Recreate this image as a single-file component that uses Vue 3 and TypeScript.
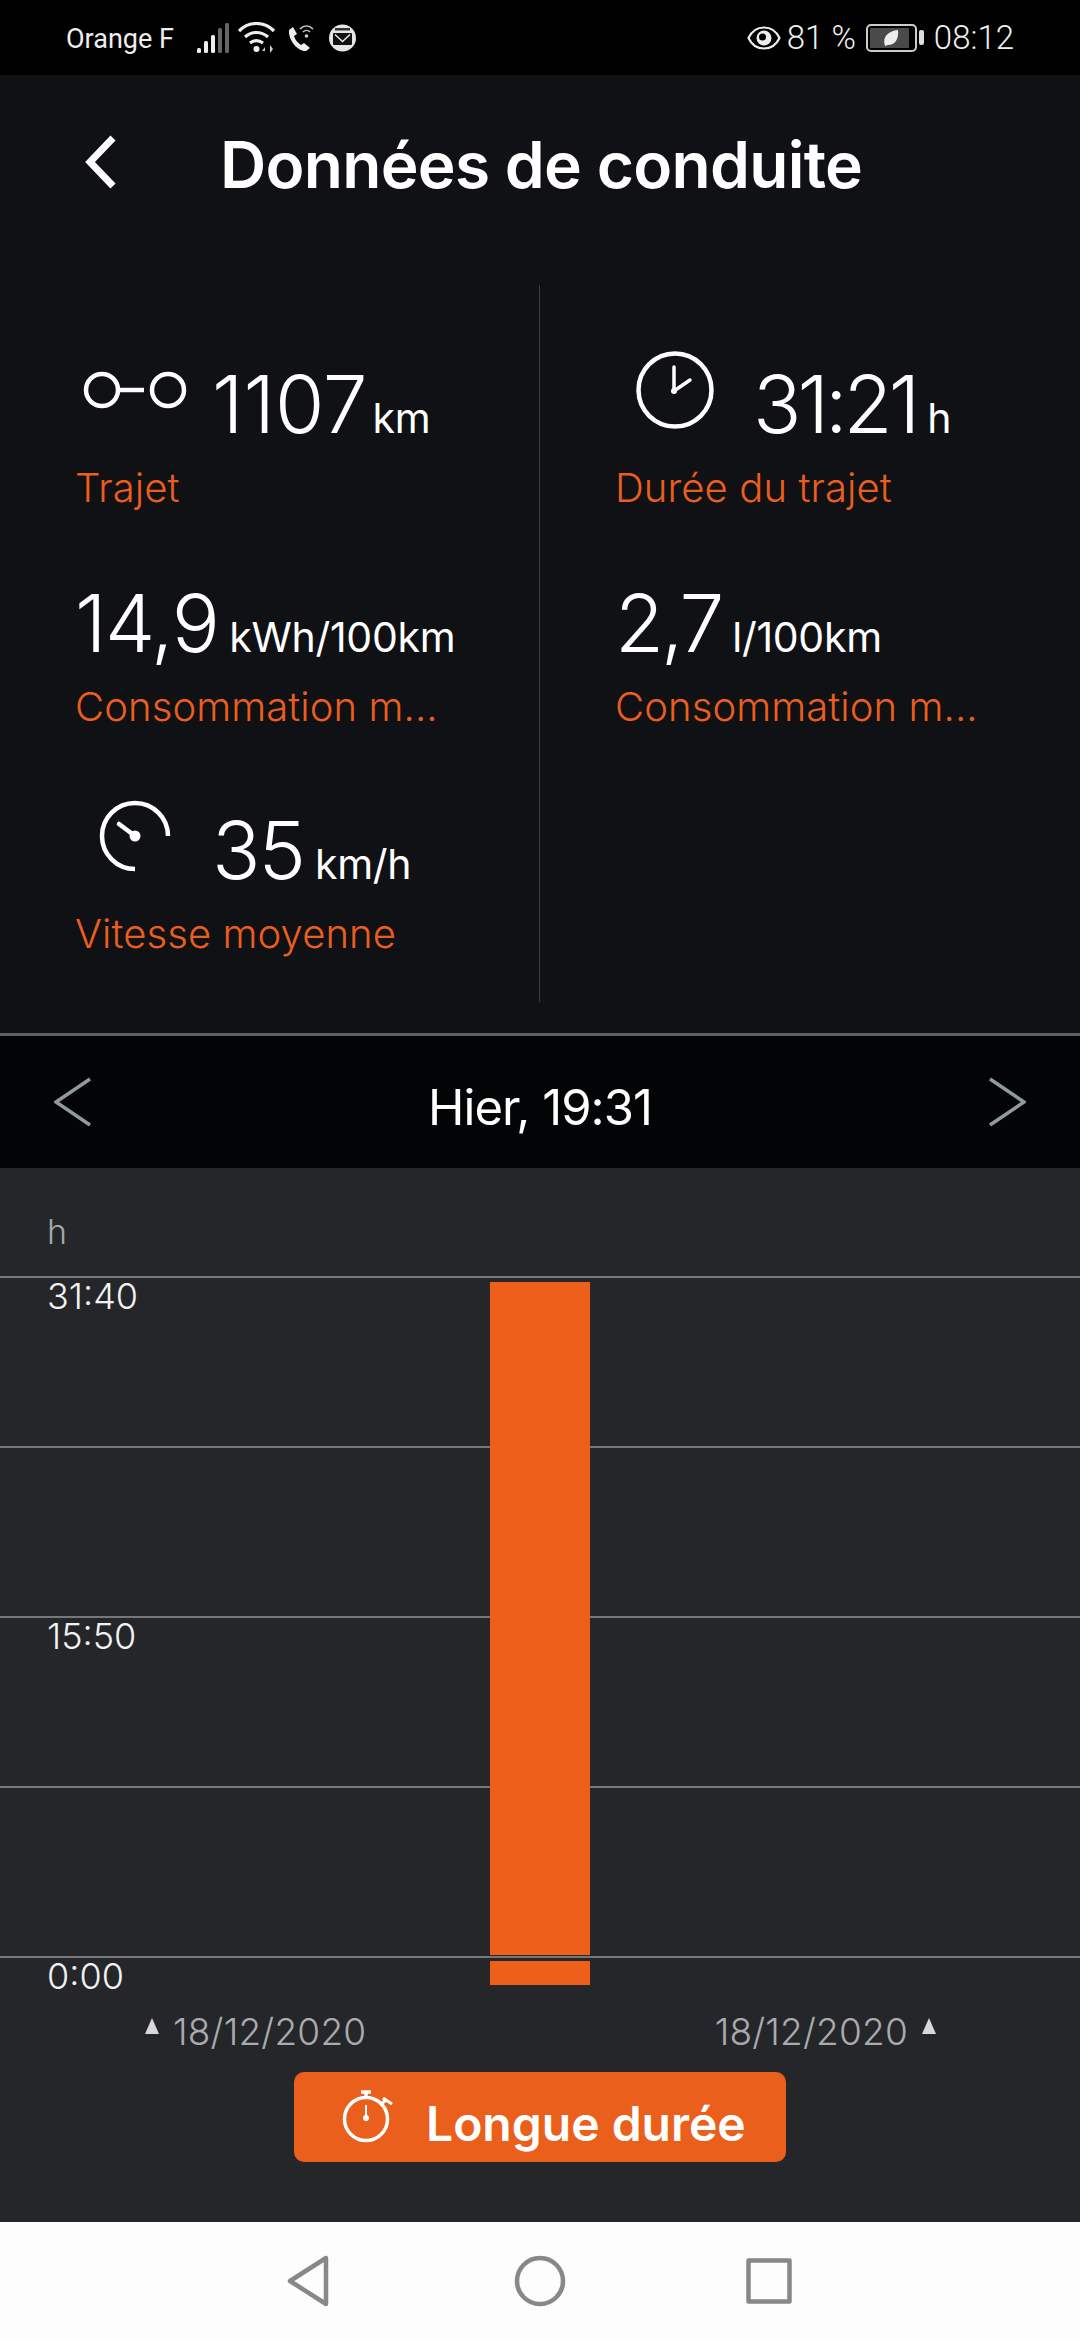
<script setup lang="ts">
interface Stat {
  value: string
  unit: string
  label: string
  icon?: 'route' | 'clock' | 'speed'
}

const stats: Stat[] = [
  { value: '1107', unit: 'km', label: 'Trajet', icon: 'route' },
  { value: '31:21', unit: 'h', label: 'Durée du trajet', icon: 'clock' },
  { value: '14,9', unit: 'kWh/100km', label: 'Consommation m...' },
  { value: '2,7', unit: 'l/100km', label: 'Consommation m...' },
  { value: '35', unit: 'km/h', label: 'Vitesse moyenne', icon: 'speed' }
]

const yLabels = [
  { text: '31:40', row: 0 },
  { text: '15:50', row: 2 },
  { text: '0:00', row: 4 }
]
</script>

<template>
  <div class="screen">
    <div class="status-bar">
      <div class="status-left">
        <span class="carrier">Orange F</span>
        <svg class="st-signal" width="34" height="32" viewBox="0 0 34 32">
          <rect x="1" y="26" width="4" height="5" rx="1.500" fill="#eee" />
          <rect x="8" y="19" width="4" height="12" rx="1.500" fill="#eee" />
          <rect x="15" y="13" width="4" height="18" rx="1.500" fill="#eee" />
          <rect x="22" y="6" width="4" height="25" rx="1.500" fill="#666" />
          <rect x="29" y="1" width="4" height="30" rx="1.500" fill="#666" />
        </svg>
        <svg class="st-wifi" width="38" height="32" viewBox="0 0 38 32" fill="none" stroke="#eee" stroke-width="3.200">
          <path d="M1 9C11 -1 26 -1 36 9" />
          <path d="M7 15C14 9 23 9 30 15" />
          <path d="M12 21C16 18 21 18 25 21" />
          <circle cx="18.500" cy="27" r="3" fill="#eee" stroke="none" />
          <path d="M27 25l-3 4h3zM32 23v8l3-4z" fill="#ccc" stroke="none" />
        </svg>
        <svg class="st-call" width="28" height="28" viewBox="0 0 28 28" fill="none">
          <path d="M2 6l4-3 4 7-3 2c1 4 4 7 7 9l3-2 6 5-4 3C12 28 1 17 2 6z" fill="#eee" />
          <path d="M13 5c4-4 9-4 13 0M16 8c2-2 5-2 7 0" stroke="#ccc" stroke-width="1.600" />
          <circle cx="19.500" cy="12" r="1.800" fill="#ccc" />
        </svg>
        <svg class="st-mail" width="27" height="28" viewBox="0 0 27 28" fill="none">
          <circle cx="13.500" cy="14" r="13.500" fill="#e6e6e6" />
          <rect x="6" y="4" width="15" height="2.500" fill="#333" />
          <rect x="4" y="9" width="19" height="12" rx="1" fill="#111" />
          <path d="M6 10.500l7.500 7 7.500-7" stroke="#e6e6e6" stroke-width="1.600" />
        </svg>
      </div>
      <div class="status-right">
        <svg class="st-eye" width="34" height="26" viewBox="0 0 34 26" fill="none">
          <path d="M1.500 13C8-1 26-1 32.500 13 26 27 8 27 1.500 13z" stroke="#eee" stroke-width="2.200" />
          <circle cx="17" cy="13" r="7.500" fill="#eee" />
          <circle cx="15.500" cy="12" r="3.500" fill="#000" />
        </svg>
        <span class="st-pct">81 %</span>
        <svg class="st-batt" width="60" height="28" viewBox="0 0 60 28" fill="none">
          <rect x="1" y="1" width="49" height="26" rx="4" stroke="#ccc" stroke-width="2" />
          <rect x="4" y="4" width="39" height="20" rx="1" fill="#4a4a4a" />
          <rect x="53" y="6" width="5" height="15" rx="2" fill="#ddd" />
          <path d="M19 22c-3-9 3-15 13-16 1 9-3 15-10 15z" fill="#eee" />
        </svg>
        <span class="st-time">08:12</span>
      </div>
    </div>

    <header class="top-bar">
      <svg class="back" width="36" height="56" viewBox="0 0 36 56" fill="none">
        <path d="M33 4L10 28l23 24" stroke="#fff" stroke-width="7" />
      </svg>
      <h1 class="title">Données de conduite</h1>
    </header>

    <section class="stats">
      <div class="stats-grid">
        <div v-for="stat in stats" :key="stat.value" class="stat">
          <div class="stat-top" :class="stat.icon ? `stat-top--${stat.icon}` : ''">
            <svg v-if="stat.icon === 'route'" class="stat-icon" width="106" height="40" viewBox="0 0 106 40" fill="none" stroke="#fff" stroke-width="4.500">
              <circle cx="20" cy="20" r="16" />
              <path d="M36 20h26" />
              <circle cx="86" cy="20" r="16" />
            </svg>
            <svg v-if="stat.icon === 'clock'" class="stat-icon" width="78" height="78" viewBox="0 0 78 78" fill="none" stroke="#fff" stroke-width="4.500" stroke-linecap="round">
              <circle cx="39" cy="39" r="36.500" />
              <path d="M38 40V16M38 40l16-11" stroke-width="3.500" />
              <circle cx="38" cy="40" r="3" fill="#fff" stroke="none" />
            </svg>
            <svg v-if="stat.icon === 'speed'" class="stat-icon" width="74" height="74" viewBox="0 0 74 74" fill="none" stroke="#fff" stroke-width="4.500">
              <path d="M69 37A33 33 0 1 0 36 70" />
              <path d="M20 25l16 12" stroke-linecap="round" />
              <circle cx="36" cy="37" r="5.500" fill="#fff" stroke="none" />
            </svg>
            <span class="stat-value">{{ stat.value }}</span>
            <span class="stat-unit">{{ stat.unit }}</span>
          </div>
          <div class="stat-label">{{ stat.label }}</div>
        </div>
      </div>
    </section>

    <div class="date-bar">
      <svg width="38" height="50" viewBox="0 0 38 50" fill="none">
        <path d="M36 2L2 25l34 23" stroke="#8f9a9e" stroke-width="3.500" />
      </svg>
      <span class="date-text">Hier, 19:31</span>
      <svg width="38" height="50" viewBox="0 0 38 50" fill="none">
        <path d="M2 2l34 23L2 48" stroke="#8f9a9e" stroke-width="3.500" />
      </svg>
    </div>

    <section class="chart">
      <div class="chart-unit">h</div>
      <div class="plot">
        <div v-for="n in 4" :key="n" class="plot-row"></div>
        <div class="plot-end"></div>
        <span
          v-for="l in yLabels"
          :key="l.text"
          class="y-label"
          :style="{ top: `${l.row * 170 - 2}px` }"
        >{{ l.text }}</span>
        <div class="bar"></div>
        <div class="bar-gap"></div>
      </div>
      <div class="dates">
        <div class="date-mark">
          <span class="tri"></span>
          <span>18/12/2020</span>
        </div>
        <div class="date-mark">
          <span>18/12/2020</span>
          <span class="tri"></span>
        </div>
      </div>
      <div class="btn">
        <svg class="btn-icon" width="62" height="62" viewBox="0 0 62 62" fill="none" stroke="#fff">
          <circle cx="26" cy="35" r="21.500" stroke-width="3.500" />
          <path d="M21 8h10" stroke-width="3.500" />
          <path d="M26 8v6" stroke-width="3.500" />
          <path d="M26 21v13" stroke-width="2" />
          <circle cx="26" cy="34" r="3" fill="#fff" stroke="none" />
          <path d="M40 21l6-5" stroke-width="3" />
          <path d="M43 14l9 6" stroke-width="3" />
        </svg>
        <span class="btn-text">Longue durée</span>
      </div>
    </section>

    <nav class="nav-bar">
      <svg width="48" height="54" viewBox="0 0 48 54" fill="none" stroke="#888" stroke-width="4.500" stroke-linejoin="round">
        <path d="M39 4v46L3 27z" />
      </svg>
      <svg width="52" height="52" viewBox="0 0 52 52" fill="none" stroke="#888" stroke-width="4.500">
        <circle cx="26" cy="26" r="23" />
      </svg>
      <svg width="46" height="46" viewBox="0 0 46 46" fill="none" stroke="#888" stroke-width="4.500" stroke-linejoin="round">
        <rect x="2.500" y="2.500" width="41" height="41" />
      </svg>
    </nav>
  </div>
</template>

<style>
html,
body {
  margin: 0;
  background: #000;
}
</style>

<style scoped>
.screen {
  width: 1080px;
  height: 2340px;
  display: flex;
  flex-direction: column;
  overflow: hidden;
  background: #101114;
  font-family: Inter, "Liberation Sans", sans-serif;
  color: #fff;
}

.status-bar {
  height: 75px;
  flex: none;
  background: #000;
  display: flex;
  justify-content: space-between;
  align-items: center;
  padding: 0 66px;
  box-sizing: border-box;
  font-family: Roboto, sans-serif;
  color: #eee;
}

.status-left,
.status-right {
  display: flex;
  align-items: center;
}

.carrier {
  width: 130px;
  font-size: 27px;
  padding-top: 2px;
}

.st-wifi { margin-left: 8px; }
.st-call { margin-left: 11px; }
.st-mail { margin-left: 14px; }

.st-pct {
  font-size: 33px;
  font-weight: 300;
  margin-left: 6px;
}

.st-batt { margin-left: 10px; }

.st-time {
  font-size: 33px;
  font-weight: 300;
  margin-left: 8px;
}

.top-bar {
  height: 178px;
  flex: none;
  display: flex;
  align-items: center;
  padding-left: 80px;
}

.back {
  margin-top: -4px;
}

.title {
  margin: 0 0 0 104px;
  font-size: 64px;
  font-weight: 600;
  letter-spacing: -0.700px;
  white-space: nowrap;
}

.stats {
  height: 783px;
  flex: none;
  box-sizing: border-box;
  padding-top: 101px;
  position: relative;
  border-bottom: 3px solid #5f5f5f;
}

.stats::after {
  content: "";
  position: absolute;
  left: 539px;
  top: 32px;
  height: 717px;
  width: 1px;
  background: #3a3c40;
}

.stats-grid {
  display: grid;
  grid-template-columns: 540px 540px;
  grid-template-rows: 219px 227px auto;
}

.stat {
  padding-left: 75px;
  min-width: 0;
}

.stat-top {
  height: 100px;
  display: flex;
  align-items: baseline;
  white-space: nowrap;
}

.stat-icon {
  align-self: flex-start;
  flex: none;
}

.stat-value {
  font-size: 80px;
  font-weight: 300;
  letter-spacing: -3px;
  line-height: 100px;
}

.stat:nth-child(3) .stat-value {
  letter-spacing: -1.500px;
}

.stat-unit {
  font-size: 41px;
  font-weight: 400;
  letter-spacing: -0.300px;
  margin-left: 11px;
}

.stat-top--route .stat-icon {
  margin: 16px 24px 0 7px;
}

.stat-top--route .stat-value {
  letter-spacing: 0;
}

.stat-top--route .stat-unit {
  margin-left: 5px;
}

.stat-top--clock .stat-icon {
  margin: -3px 39px 0 21px;
}

.stat-top--clock .stat-value {
  letter-spacing: -4px;
}

.stat-top--speed .stat-icon {
  margin: -1px 39px 0 24px;
}

.stat-top--speed .stat-value {
  letter-spacing: -2px;
}

.stat-label {
  margin-top: 9px;
  font-size: 40px;
  line-height: 50px;
  font-weight: 300;
  letter-spacing: 0.100px;
  color: #ec5e1e;
  white-space: nowrap;
}

.date-bar {
  height: 132px;
  flex: none;
  background: #030405;
  display: flex;
  align-items: center;
  justify-content: space-between;
  padding: 0 54px;
}

.date-text {
  padding-top: 10px;
  font-size: 49px;
  letter-spacing: -1px;
}

.chart {
  flex: 1;
  background: #25262a;
  display: flex;
  flex-direction: column;
  min-height: 0;
}

.chart-unit {
  height: 108px;
  box-sizing: border-box;
  padding: 43px 0 0 47px;
  font-size: 34px;
  font-weight: 300;
  color: #a4a8aa;
}

.plot {
  position: relative;
  flex: none;
}

.plot-row {
  height: 170px;
  border-top: 2px solid #77787b;
  box-sizing: border-box;
}

.plot-end {
  border-top: 2px solid #77787b;
  height: 54px;
  box-sizing: border-box;
}

.y-label {
  position: absolute;
  left: 47px;
  font-size: 36px;
  font-weight: 300;
  line-height: 44px;
  color: #f2f2f2;
}

.bar {
  position: absolute;
  left: 490px;
  top: 6px;
  width: 100px;
  height: 703px;
  background: #ee5f1b;
}

.bar-gap {
  position: absolute;
  left: 490px;
  top: 679px;
  width: 100px;
  height: 6px;
  background: linear-gradient(#25262a 1px, #77787b 1px, #77787b 3px, #25262a 3px);
}

.dates {
  display: flex;
  justify-content: space-between;
  padding: 0 144px 0 145px;
  font-size: 37px;
  line-height: 44px;
  font-weight: 300;
  letter-spacing: 0.200px;
  color: #a9abae;
}

.date-mark {
  display: flex;
  align-items: flex-start;
  gap: 14px;
}

.tri {
  width: 0;
  height: 0;
  margin-top: 8px;
  border-left: 7px solid transparent;
  border-right: 7px solid transparent;
  border-bottom: 16px solid #d8d8d8;
}

.btn {
  width: 492px;
  height: 90px;
  margin: 18px auto 0;
  background: #ea5f1c;
  border-radius: 10px;
  display: flex;
  align-items: center;
  padding-left: 46px;
  box-sizing: border-box;
  gap: 24px;
  font-size: 48px;
  font-weight: 600;
  letter-spacing: 0;
}

.btn-icon {
  align-self: flex-start;
  margin-top: 12px;
}

.btn-text {
  padding-top: 12px;
}

.nav-bar {
  height: 118px;
  flex: none;
  background: #fdfdfd;
  display: grid;
  grid-template-columns: repeat(3, 48px);
  justify-content: center;
  column-gap: 181px;
  align-items: center;
  justify-items: center;
}
</style>
